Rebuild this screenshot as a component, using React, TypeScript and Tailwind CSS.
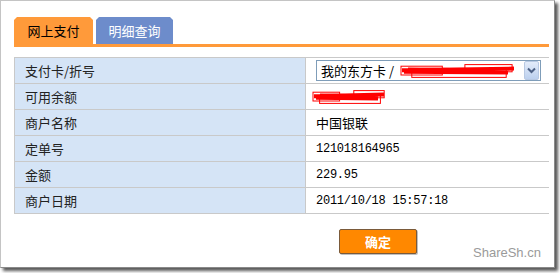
import React from "react";

const rows: { label: string; value: React.ReactNode }[] = [
  { label: "支付卡/折号", value: "select" },
  { label: "可用余额", value: "redact" },
  { label: "商户名称", value: "中国银联" },
  { label: "定单号", value: "121018164965" },
  { label: "金额", value: "229.95" },
  { label: "商户日期", value: "2011/10/18 15:57:18" },
];

const cjk = "font-['Noto_Sans_CJK_SC','Noto_Sans',sans-serif]";
const mono = "font-['Liberation_Mono','Noto_Sans_CJK_SC',monospace]";

function Scribble({ w, h }: { w: number; h: number }) {
  return (
    <svg width={w} height={h} viewBox={`0 0 ${w} ${h}`} className="block">
      <path d={`M2 ${h * 0.45} L${w - 4} ${h * 0.35} M4 ${h * 0.55} L${w - 10} ${h * 0.6} M8 ${h * 0.4} L${w * 0.6} ${h * 0.45}`} stroke="#ff0000" strokeWidth={4} fill="none" />
      <rect x={1} y={h * 0.2} width={w * 0.35} height={h * 0.55} stroke="#ff0000" strokeWidth={1} fill="none" />
      <rect x={w * 0.1} y={h * 0.4} width={w * 0.8} height={h * 0.5} stroke="#ff0000" strokeWidth={1} fill="none" />
      <rect x={w * 0.55} y={h * 0.1} width={w * 0.4} height={h * 0.45} stroke="#ff0000" strokeWidth={1} fill="none" />
    </svg>
  );
}

function Select() {
  return (
    <div className="ml-[10px] flex h-[21px] w-[225px] items-center border border-[#7f9db9] bg-white">
      <span className={`pl-[4px] text-[13px] leading-none text-black ${cjk} whitespace-nowrap`}>我的东方卡 /</span>
      <div className="ml-[6px] flex-1 overflow-hidden">
        <Scribble w={118} h={16} />
      </div>
      <div className="mr-[1px] flex h-[19px] w-[15px] items-center justify-center rounded-[2px] border border-[#b8c9e3] bg-gradient-to-b from-[#e3ecfa] to-[#bcd0ee]">
        <svg width="9" height="7" viewBox="0 0 9 7">
          <path d="M1 1.5 L4.5 5 L8 1.5" stroke="#4d6185" strokeWidth="2" fill="none" />
        </svg>
      </div>
    </div>
  );
}

export default function App() {
  return (
    <div className="relative h-[273px] w-[560px] bg-white">
      <div className="relative h-[268px] w-[555px] border border-[#c4c4c4] border-r-[#8a8a8a] border-b-[#8a8a8a] bg-white shadow-[3px_3px_3px_rgba(0,0,0,0.65)]">
        <div className="pl-[13px] pr-[5px] pt-[16px]">
          <div className="flex h-[27px] items-stretch gap-[3px]">
            <div className={`flex w-[79px] items-center justify-center bg-[#ff9a3a] text-[13px] text-black ${cjk} [clip-path:polygon(3px_0,calc(100%-3px)_0,100%_3px,100%_100%,0_100%,0_3px)]`}>
              网上支付
            </div>
            <div className={`flex w-[77px] items-center justify-center bg-[#6d8ccb] text-[13px] text-white ${cjk} [clip-path:polygon(3px_0,calc(100%-3px)_0,100%_3px,100%_100%,0_100%,0_3px)]`}>
              明细查询
            </div>
          </div>
          <div className="h-[3px] bg-[#ff9a3a]" />
          <div className="mt-[10px] border-l border-t border-[#c9c9c9]">
            {rows.map((r, i) => (
              <div key={i} className="flex h-[26px] border-b border-[#c9c9c9]">
                <div className={`flex w-[291px] items-center border-r border-[#c9c9c9] bg-[#d5e4f6] pl-[10px] text-[13px] text-[#222] ${cjk}`}>
                  {r.label}
                </div>
                <div className="flex flex-1 items-center">
                  {r.value === "select" ? (
                    <Select />
                  ) : r.value === "redact" ? (
                    <div className="ml-[6px]">
                      <Scribble w={76} h={16} />
                    </div>
                  ) : (
                    <span className={`pl-[10px] text-black ${i === 2 ? `text-[13px] ${cjk}` : `text-[12px] tracking-[-0.25px] ${mono}`}`}>
                      {r.value}
                    </span>
                  )}
                </div>
              </div>
            ))}
          </div>
          <div className="mt-[15px] flex pl-[325px]">
            <button className={`h-[25px] w-[78px] rounded-[2px] border border-[#7a5a3a] bg-[#ff8800] text-[13px] font-bold text-white ${cjk} shadow-[1px_1px_0_rgba(0,0,0,0.25)]`}>
              确定
            </button>
          </div>
        </div>
        <span className="absolute left-[472px] top-[242px] font-['Liberation_Sans',Arial,sans-serif] text-[13px] text-[#9a9a9a]">
          ShareSh.cn
        </span>
      </div>
    </div>
  );
}
